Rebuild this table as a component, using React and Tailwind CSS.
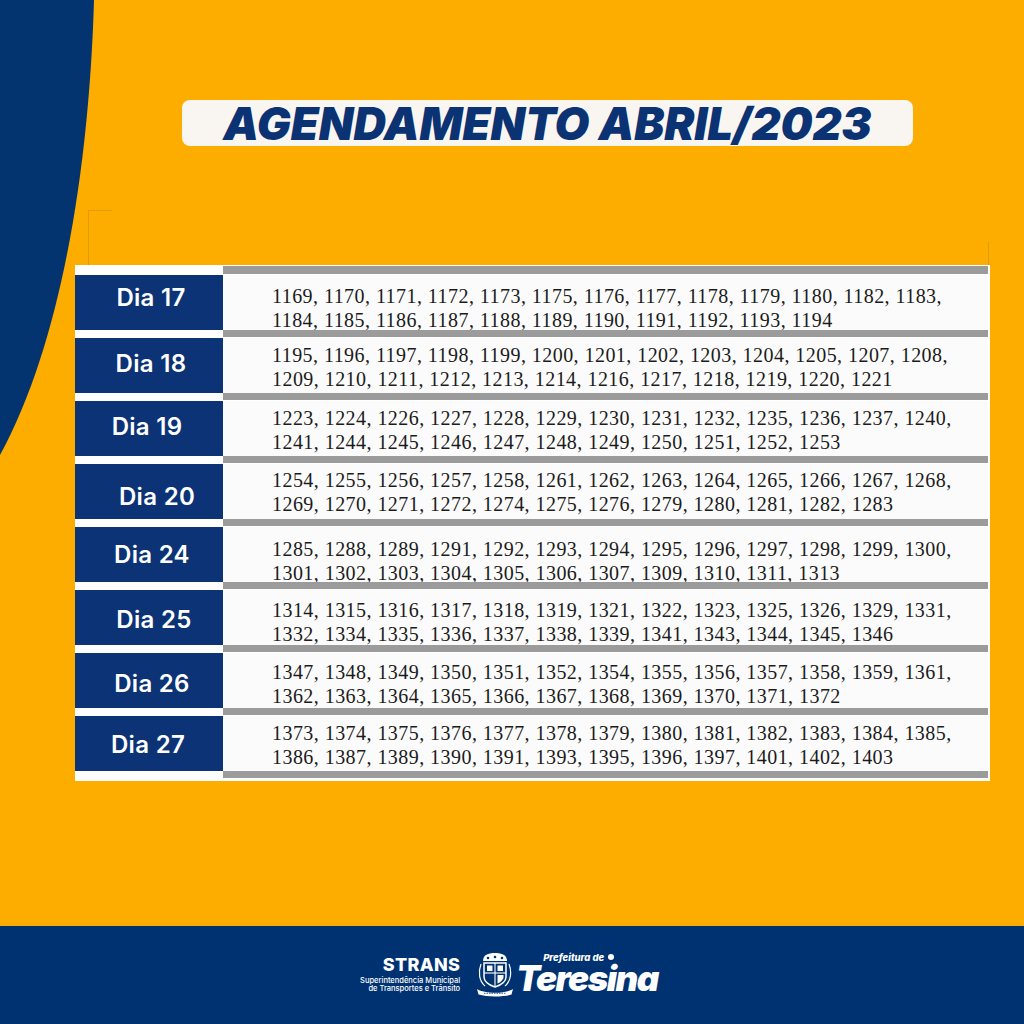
import React from "react";

const rows = [
  { d: "Dia 17", pt: "pt-[9px]", lab: "pb-[10px] pl-[4px]", l1: "1169, 1170, 1171, 1172, 1173, 1175, 1176, 1177, 1178, 1179, 1180, 1182, 1183,", l2: "1184, 1185, 1186, 1187, 1188, 1189, 1190, 1191, 1192, 1193, 1194" },
  { d: "Dia 18", pt: "pt-[5px]", lab: "pb-[4px] pl-[4px]", l1: "1195, 1196, 1197, 1198, 1199, 1200, 1201, 1202, 1203, 1204, 1205, 1207, 1208,", l2: "1209, 1210, 1211, 1212, 1213, 1214, 1216, 1217, 1218, 1219, 1220, 1221" },
  { d: "Dia 19", pt: "pt-[5px]", lab: "pb-[4px] pr-[4px]", l1: "1223, 1224, 1226, 1227, 1228, 1229, 1230, 1231, 1232, 1235, 1236, 1237, 1240,", l2: "1241, 1244, 1245, 1246, 1247, 1248, 1249, 1250, 1251, 1252, 1253" },
  { d: "Dia 20", pt: "pt-[4px]", lab: "pt-[10px] pl-[16px]", l1: "1254, 1255, 1256, 1257, 1258, 1261, 1262, 1263, 1264, 1265, 1266, 1267, 1268,", l2: "1269, 1270, 1271, 1272, 1274, 1275, 1276, 1279, 1280, 1281, 1282, 1283" },
  { d: "Dia 24", pt: "pt-[10px]", lab: "pt-[1px] pl-[6px]", l1: "1285, 1288, 1289, 1291, 1292, 1293, 1294, 1295, 1296, 1297, 1298, 1299, 1300,", l2: "1301, 1302, 1303, 1304, 1305, 1306, 1307, 1309, 1310, 1311, 1313" },
  { d: "Dia 25", pt: "pt-[8px]", lab: "pt-[5px] pl-[10px]", l1: "1314, 1315, 1316, 1317, 1318, 1319, 1321, 1322, 1323, 1325, 1326, 1329, 1331,", l2: "1332, 1334, 1335, 1336, 1337, 1338, 1339, 1341, 1343, 1344, 1345, 1346" },
  { d: "Dia 26", pt: "pt-[7px]", lab: "pt-[6px] pl-[6px]", l1: "1347, 1348, 1349, 1350, 1351, 1352, 1354, 1355, 1356, 1357, 1358, 1359, 1361,", l2: "1362, 1363, 1364, 1365, 1366, 1367, 1368, 1369, 1370, 1371, 1372" },
  { d: "Dia 27", pt: "pt-[5px]", lab: "pt-[2px] pr-[2px]", l1: "1373, 1374, 1375, 1376, 1377, 1378, 1379, 1380, 1381, 1382, 1383, 1384, 1385,", l2: "1386, 1387, 1389, 1390, 1391, 1393, 1395, 1396, 1397, 1401, 1402, 1403" },
];

function Sep() {
  return (
    <div className="flex h-[8px]">
      <div className="w-[148px] bg-white" />
      <div className="flex-1 flex flex-col bg-white">
        <div className="h-[7px] bg-[#9b9b9b]" />
      </div>
      <div className="w-[2px] bg-white" />
    </div>
  );
}

function Crest() {
  return (
    <svg width="38" height="46" viewBox="0 0 38 46" fill="none" stroke="white" strokeWidth="1.5">
      <path d="M7 10 C7 4 12 2 19 2 C26 2 31 4 31 10 Z" fill="white" stroke="none" />
      <circle cx="12" cy="7" r="1.3" fill="#003272" stroke="none" />
      <circle cx="19" cy="6" r="1.3" fill="#003272" stroke="none" />
      <circle cx="26" cy="7" r="1.3" fill="#003272" stroke="none" />
      <path d="M8 12 H30 V26 C30 31 25 34 19 36 C13 34 8 31 8 26 Z" />
      <path d="M19 12 V35.5" strokeWidth="1.1" />
      <path d="M8 22 H30" strokeWidth="1.1" />
      <path d="M11 14.5 H16.5 V20 H11 Z" fill="white" stroke="none" />
      <path d="M21.5 14.5 H27 V20 H21.5 Z" fill="white" stroke="none" />
      <path d="M21.5 24 H27.5 V27 C26 30 24 31.5 21.5 32.5 Z" fill="white" stroke="none" />
      <path d="M5 13 C2 21 3 30 9 35" strokeWidth="1.2" />
      <path d="M33 13 C36 21 35 30 29 35" strokeWidth="1.2" />
      <path d="M1 38 C9 43 29 43 37 38 L35.5 43.5 C27 46 11 46 2.5 43.5 Z" fill="white" stroke="none" />
      <path d="M8 42.3 H30" stroke="#003272" strokeWidth="0.8" strokeDasharray="1.5 1" />
    </svg>
  );
}

export default function App() {
  return (
    <div className="relative w-[1024px] h-[1024px] overflow-hidden bg-[#fdad00] flex flex-col">
      <svg className="absolute left-0 top-0" width="100" height="470" viewBox="0 0 100 470">
        <path d="M0 0 L94 0 C90 140 68 330 0 455 Z" fill="#03346f" />
      </svg>

      <div className="relative mt-[100px] ml-[182px] w-[731px] h-[46px] rounded-[8px] bg-[#f9f6f1] flex items-center justify-center">
        <span
          className="text-[#0b3373] text-[45px] font-black italic tracking-[0px] leading-none"
          style={{ fontFamily: "Inter, 'Noto Sans', sans-serif" }}
        >
          AGENDAMENTO ABRIL/2023
        </span>
      </div>

      <div className="relative flex ml-[88px] w-[901px] mt-[64px] h-[55px]">
        <div className="w-[24px] border-l border-t border-[#e39a08]" />
        <div className="flex-1" />
        <div className="mt-[32px] border-r border-[#e39a08]" />
      </div>

      <div
        className="relative ml-[75px] w-[915px] flex flex-col bg-white"
        style={{ fontFamily: "'Liberation Serif', 'Times New Roman', serif" }}
      >
        <div className="flex h-[10px]">
          <div className="w-[148px] bg-white" />
          <div className="flex-1 flex flex-col pt-[1px]">
            <div className="h-[8px] bg-[#9b9b9b]" />
          </div>
          <div className="w-[2px] bg-white" />
        </div>
        {rows.map((r, i) => (
          <React.Fragment key={r.d}>
            {i > 0 && <Sep />}
            <div className="flex h-[55px]">
              <div
                className={"w-[148px] bg-[#0b3375] flex items-center justify-center text-white text-[24px] font-semibold tracking-[0.3px] " + r.lab}
                style={{ fontFamily: "Inter, 'Noto Sans', sans-serif" }}
              >
                {r.d}
              </div>
              <div className={"flex-1 bg-[#fbfbfb] pl-[49px] text-[#1b1b1b] text-[20px] leading-[24px] tracking-[0.45px] " + r.pt}>
                <div className="whitespace-nowrap">{r.l1}</div>
                <div className="whitespace-nowrap">{r.l2}</div>
              </div>
              <div className="w-[2px] bg-white" />
            </div>
          </React.Fragment>
        ))}
        <div className="flex h-[10px]">
          <div className="w-[148px] bg-white" />
          <div className="flex-1 flex flex-col">
            <div className="h-[7px] bg-[#9b9b9b]" />
          </div>
          <div className="w-[2px] bg-white" />
        </div>
      </div>

      <div className="relative mt-auto h-[98px] bg-[#003272] flex items-center justify-center pb-[2px] pr-[6px]">
        <div
          className="flex flex-col items-end text-white leading-none mr-[16px]"
          style={{ fontFamily: "Inter, 'Noto Sans', sans-serif" }}
        >
          <span className="text-[18px] font-extrabold tracking-[0.3px]">STRANS</span>
          <span className="text-[7.5px] font-medium mt-[3px]">Superintendência Municipal</span>
          <span className="text-[7.5px] font-medium mt-[1px]">de Transportes e Trânsito</span>
        </div>
        <Crest />
        <div
          className="relative flex flex-col text-white leading-none pt-[8px] ml-[2px]"
          style={{ fontFamily: "Inter, 'Noto Sans', sans-serif" }}
        >
          <span className="absolute left-[27px] top-[0px] text-[9.5px] font-extrabold italic flex items-center gap-[4px]">
            Prefeitura de <span className="inline-block w-[6px] h-[6px] rounded-full bg-white" />
          </span>
          <span className="text-[35px] font-black italic tracking-[-1.5px]">Teresina</span>
        </div>
      </div>
    </div>
  );
}
